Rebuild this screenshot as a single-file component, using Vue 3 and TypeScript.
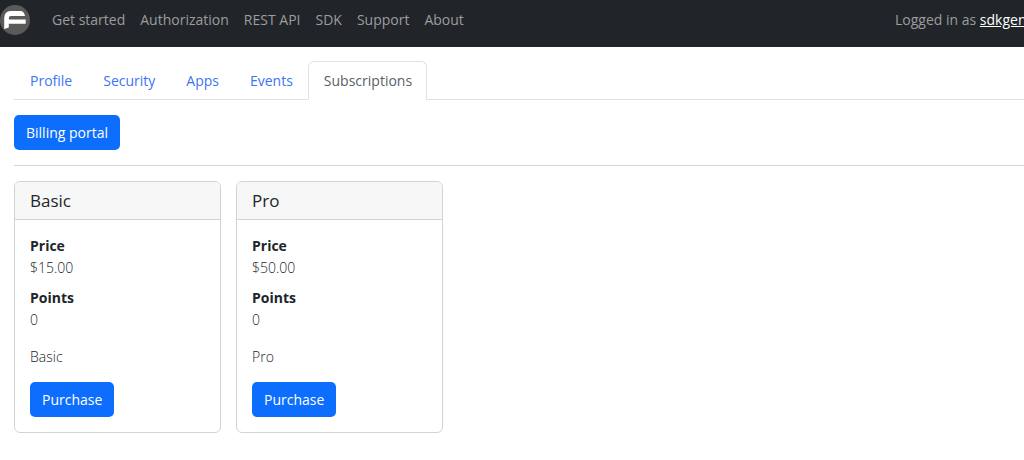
<script setup lang="ts">
interface Plan {
  id: string
  name: string
  price: string
  points: number
  description: string
}

const navLinks: string[] = ['Get started', 'Authorization', 'REST API', 'SDK', 'Support', 'About']
const tabs: string[] = ['Profile', 'Security', 'Apps', 'Events', 'Subscriptions']
const activeTab = 'Subscriptions'

const plans: Plan[] = [
  { id: 'basic', name: 'Basic', price: '$15.00', points: 0, description: 'Basic' },
  { id: 'pro', name: 'Pro', price: '$50.00', points: 0, description: 'Pro' },
]
</script>

<template>
  <div class="page">
    <header class="navbar">
      <a class="brand" href="#" aria-label="Home">
        <svg width="30" height="30" viewBox="0 0 30 30" aria-hidden="true">
          <circle cx="15" cy="15" r="15" fill="#5a5a5a" />
          <path
            d="M10 6H20.500Q24 6 25 11H11Q8.800 11.200 8.800 13.800V14.500H25.700V18.800H8.800V22.500L4.200 24V13Q4.200 7 10 6Z"
            fill="#fff"
          />
          <path d="M9 12.800H25" stroke="#5a5a5a" stroke-width="2.200" />
        </svg>
      </a>
      <nav class="nav-links" aria-label="Main">
        <a v-for="link in navLinks" :key="link" href="#">{{ link }}</a>
      </nav>
      <div class="account">Logged in as <a href="#">sdkgen</a></div>
    </header>

    <main class="content">
      <nav class="tabs" aria-label="Account">
        <a
          v-for="tab in tabs"
          :key="tab"
          href="#"
          class="tab"
          :class="{ active: tab === activeTab }"
          :aria-current="tab === activeTab ? 'page' : undefined"
          >{{ tab }}</a
        >
      </nav>

      <button type="button" class="btn">Billing portal</button>
      <hr class="divider" />

      <div class="plans">
        <article v-for="plan in plans" :key="plan.id" class="card">
          <h5 class="card-header">{{ plan.name }}</h5>
          <div class="card-body">
            <dl class="details">
              <dt>Price</dt>
              <dd>{{ plan.price }}</dd>
              <dt>Points</dt>
              <dd>{{ plan.points }}</dd>
            </dl>
            <p class="description">{{ plan.description }}</p>
            <button type="button" class="btn">Purchase</button>
          </div>
        </article>
      </div>
    </main>
  </div>
</template>

<style>
body {
  margin: 0;
  background: #fff;
}
</style>

<style scoped>
.page {
  overflow-x: hidden;
  color: #212529;
  font-family: 'Segoe UI', 'Open Sans', 'Noto Sans', sans-serif;
  font-size: 14px;
  font-weight: 300;
  line-height: 22px;
}

.page *,
.page {
  box-sizing: border-box;
}

.navbar {
  display: flex;
  align-items: flex-start;
  padding: 5px 0 12px;
  background: #212529;
  color: #9b9d9e;
  font-weight: 400;
  white-space: nowrap;
}

.brand {
  display: flex;
  margin-right: 22px;
}

.nav-links {
  display: flex;
  gap: 15px;
  line-height: 30px;
}

.nav-links a {
  color: inherit;
  text-decoration: none;
}

.account {
  width: 129px;
  margin-left: auto;
  overflow: hidden;
  line-height: 30px;
}

.account a {
  color: #fff;
}

.content {
  padding: 14px 0 14px 14px;
}

.tabs {
  display: flex;
  margin-bottom: 15px;
  border-bottom: 1px solid #dee2e6;
  font-weight: 400;
}

.tab {
  margin-bottom: -1px;
  padding: 8px 14px 7px 15px;
  border: 1px solid transparent;
  border-radius: 6px 6px 0 0;
  color: #3d74f7;
  text-decoration: none;
}

.tab.active {
  border-color: #dee2e6 #dee2e6 #fff;
  background: #fff;
  color: #5a6067;
}

.btn {
  display: block;
  padding: 6px 12px;
  border: 0;
  border-radius: 5px;
  background: #0d6efd;
  color: #fff;
  font: inherit;
  font-weight: 400;
  line-height: 23px;
}

.divider {
  height: 1px;
  margin: 15px 0;
  border: 0;
  background: #d3d4d4;
}

.plans {
  display: flex;
  gap: 15px;
}

.card {
  flex: 0 1 207px;
  border: 1px solid #d3d3d3;
  border-radius: 6px;
}

.card-header {
  margin: 0;
  padding: 8px 15px 7px;
  border-bottom: 1px solid #d3d3d3;
  border-radius: 5px 5px 0 0;
  background: #f7f7f7;
  font-size: 17px;
  font-weight: 500;
  line-height: 22px;
}

.card-body {
  padding: 15px;
}

.details {
  margin: 0 0 15px;
}

.details dt {
  font-weight: 700;
}

.details dd {
  margin: 0 0 8px;
}

.description {
  margin: 0 0 14px;
}
</style>
